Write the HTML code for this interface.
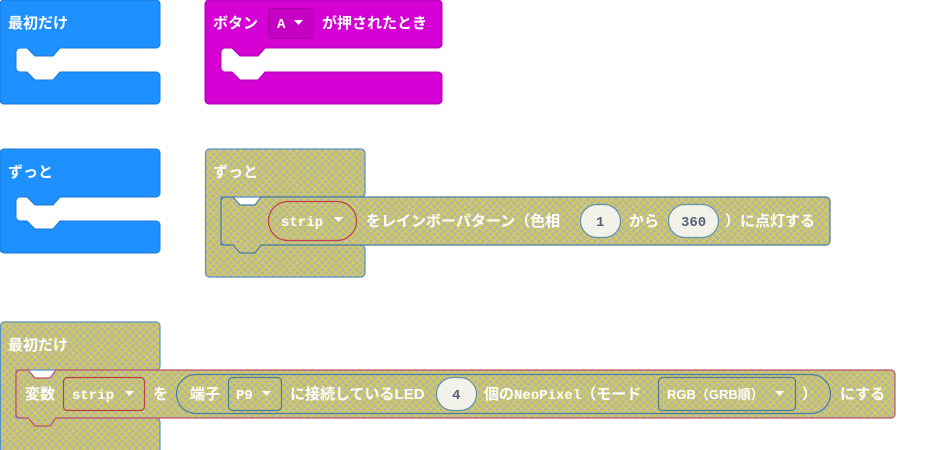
<!DOCTYPE html>
<html><head><meta charset="utf-8"><style>
html,body{margin:0;padding:0;background:#fff;width:947px;height:450px;overflow:hidden}
svg{display:block}
text{font-family:"Liberation Sans","Noto Sans CJK JP",sans-serif;font-weight:bold;font-size:15px;fill:#fff}
.m{font-family:"Liberation Mono","Noto Sans CJK JP",monospace;font-size:14px}
.d{fill:#575e75}
</style></head><body>
<svg width="947" height="450" viewBox="0 0 947 450" xmlns="http://www.w3.org/2000/svg">
<defs>
<pattern id="h" width="7" height="7" patternUnits="userSpaceOnUse">
<rect width="7" height="7" fill="#b7b5ab"/>
<path d="M-1,1 L1,-1 M0,7 L7,0 M6,8 L8,6 M-1,6 L1,8 M0,0 L7,7 M6,-1 L8,1" stroke="#d8d43a" stroke-width="1.1"/>
</pattern>
</defs>

<path d="M0,4 a4,4 0 0 1 4,-4 H156 a4,4 0 0 1 4,4 V44 a4,4 0 0 1 -4,4 H60 l-7,8 H35 l-8,-8 H20 a4,4 0 0 0 -4,4 V68 a4,4 0 0 0 4,4 H27 l8,8 H53 l7,-8 H156 a4,4 0 0 1 4,4 V100 a4,4 0 0 1 -4,4 H4 a4,4 0 0 1 -4,-4 Z" fill="#1e90ff" stroke="#1a7ad8" stroke-width="1"/>
<text x="8" y="28">最初だけ</text>

<path d="M205,4 a4,4 0 0 1 4,-4 H438 a4,4 0 0 1 4,4 V44 a4,4 0 0 1 -4,4 H265 l-7,8 H240 l-8,-8 H225 a4,4 0 0 0 -4,4 V68 a4,4 0 0 0 4,4 H232 l8,8 H258 l7,-8 H438 a4,4 0 0 1 4,4 V100 a4,4 0 0 1 -4,4 H209 a4,4 0 0 1 -4,-4 Z" fill="#d400d4" stroke="#b000b0" stroke-width="1"/>
<text x="213" y="28">ボタン</text>
<rect x="268.5" y="8.5" width="45" height="30" rx="4" fill="#c400c4" stroke="#a800a8"/>
<text x="277" y="28" class="m">A</text>
<path d="M294,20 h9 l-4.5,5 z" fill="#fff"/>
<text x="322" y="28">が押されたとき</text>

<path d="M0,153 a4,4 0 0 1 4,-4 H156 a4,4 0 0 1 4,4 V193 a4,4 0 0 1 -4,4 H60 l-7,8 H35 l-8,-8 H20 a4,4 0 0 0 -4,4 V217 a4,4 0 0 0 4,4 H27 l8,8 H53 l7,-8 H156 a4,4 0 0 1 4,4 V249 a4,4 0 0 1 -4,4 H4 a4,4 0 0 1 -4,-4 Z" fill="#1e90ff" stroke="#1a7ad8" stroke-width="1"/>
<text x="8" y="177">ずっと</text>

<path d="M205.5,153 a4,4 0 0 1 4,-4 H361 a4,4 0 0 1 4,4 V193 a4,4 0 0 1 -4,4 H221 V245 H361 a4,4 0 0 1 4,4 V273 a4,4 0 0 1 -4,4 H209.5 a4,4 0 0 1 -4,-4 Z" fill="url(#h)" stroke="#5b8fbf" stroke-width="1.2"/>
<text x="213" y="177">ずっと</text>
<path d="M221,201 a4,4 0 0 1 4,-4 H233 l7,8 H255 l6,-8 H826 a4,4 0 0 1 4,4 V241 a4,4 0 0 1 -4,4 H261 l-6,8 H240 l-7,-8 H225 a4,4 0 0 1 -4,-4 Z" fill="url(#h)" stroke="#4a7ea0" stroke-width="1.2"/>
<rect x="268.5" y="201.5" width="88" height="39" rx="19.5" fill="url(#h)" stroke="#c0404a" stroke-width="1.2"/>
<text x="281" y="226" class="m">strip</text>
<path d="M334,217 h9 l-4.5,5 z" fill="#fff"/>
<text x="366" y="226">をレインボーパターン（色相</text>
<rect x="580.5" y="204.5" width="40" height="33" rx="16.5" fill="#f2f2ea" stroke="#5f93a8" stroke-width="1.2"/>
<text x="596" y="226" class="m d">1</text>
<text x="629" y="226">から</text>
<rect x="668.5" y="204.5" width="50" height="33" rx="16.5" fill="#f2f2ea" stroke="#5f93a8" stroke-width="1.2"/>
<text x="681" y="226" class="m d">360</text>
<text x="725" y="226">）に点灯する</text>

<path d="M0.5,326 a4,4 0 0 1 4,-4 H156 a4,4 0 0 1 4,4 V366 a4,4 0 0 1 -4,4 H16 V418 H156 a4,4 0 0 1 4,4 V451 H0.5 Z" fill="url(#h)" stroke="#5b8fbf" stroke-width="1.2"/>
<text x="8" y="350">最初だけ</text>
<path d="M16,374 a4,4 0 0 1 4,-4 H28 l7,8 H50 l6,-8 H891 a4,4 0 0 1 4,4 V414 a4,4 0 0 1 -4,4 H56 l-6,8 H35 l-7,-8 H20 a4,4 0 0 1 -4,-4 Z" fill="url(#h)" stroke="#c05068" stroke-width="1.2"/>
<text x="25" y="399">変数</text>
<rect x="63.5" y="377.5" width="81" height="33" rx="4" fill="url(#h)" stroke="#b84048" stroke-width="1.2"/>
<text x="72" y="399" class="m">strip</text>
<path d="M125,391 h9 l-4.5,5 z" fill="#fff"/>
<text x="153" y="399">を</text>
<rect x="176.5" y="374.5" width="654" height="39" rx="19.5" fill="url(#h)" stroke="#4a7ea0" stroke-width="1.2"/>
<text x="190" y="399">端子</text>
<rect x="228.5" y="377.5" width="53" height="33" rx="4" fill="url(#h)" stroke="#4a7e90" stroke-width="1.2"/>
<text x="236" y="399" class="m">P9</text>
<path d="M262,391 h9 l-4.5,5 z" fill="#fff"/>
<text x="290" y="399">に接続しているLED</text>
<rect x="436.5" y="377.5" width="40" height="33" rx="16.5" fill="#f2f2ea" stroke="#5f93a8" stroke-width="1.2"/>
<text x="452" y="399" class="m d">4</text>
<text x="484" y="399">個の<tspan class="m">NeoPixel</tspan>（モード</text>
<rect x="658.5" y="377.5" width="137" height="33" rx="4" fill="url(#h)" stroke="#4a7e90" stroke-width="1.2"/>
<text x="667" y="399" style="font-size:13px">RGB（GRB順）</text>
<path d="M775,391 h9 l-4.5,5 z" fill="#fff"/>
<text x="802" y="399">）</text>
<text x="840" y="399">にする</text>
</svg>
</body></html>
